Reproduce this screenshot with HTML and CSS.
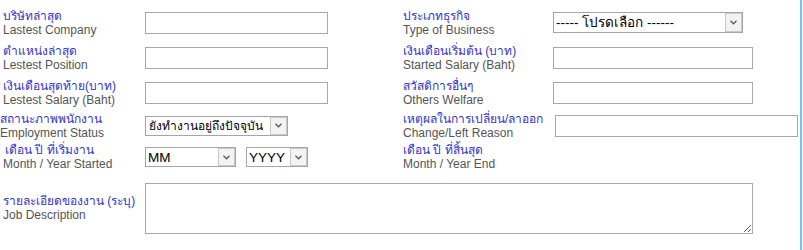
FILE: index.html
```html
<!DOCTYPE html>
<html lang="th">
  <head>
    <meta charset="UTF-8">
    <meta name="viewport" content="width=device-width, initial-scale=1.0">
    <link rel="stylesheet" href="styles.css">
    <title>Work Experience</title>
  </head>
  <body>
    <div class="wrapper">
      <form class="work">
        <label class="caption">
          <span class="th">บริษัทล่าสุด</span>
          <span class="en">Lastest Company</span>
        </label>
        <div class="field"><input class="text short" type="text"></div>
        <label class="caption right">
          <span class="th">ประเภทธุรกิจ</span>
          <span class="en">Type of Business</span>
        </label>
        <div class="field">
          <span class="pick business">
            <select><option>----- โปรดเลือก ------</option></select>
            <span class="arrow"><svg width="7" height="5" viewBox="0 0 7 5"><path d="M0.5 0.8 L3.5 3.8 L6.5 0.8" fill="none" stroke="#5a5a5a" stroke-width="1.3"/></svg></span>
          </span>
        </div>

        <label class="caption">
          <span class="th">ตำแหน่งล่าสุด</span>
          <span class="en">Lestest Position</span>
        </label>
        <div class="field"><input class="text short" type="text"></div>
        <label class="caption right">
          <span class="th">เงินเดือนเริ่มต้น (บาท)</span>
          <span class="en">Started Salary (Baht)</span>
        </label>
        <div class="field"><input class="text wide" type="text"></div>

        <label class="caption">
          <span class="th">เงินเดือนสุดท้าย(บาท)</span>
          <span class="en">Lestest Salary (Baht)</span>
        </label>
        <div class="field"><input class="text short" type="text"></div>
        <label class="caption right">
          <span class="th">สวัสดิการอื่นๆ</span>
          <span class="en">Others Welfare</span>
        </label>
        <div class="field"><input class="text wide" type="text"></div>

        <label class="caption flush">
          <span class="th">สถานะภาพพนักงาน</span>
          <span class="en">Employment Status</span>
        </label>
        <div class="field">
          <span class="pick status">
            <select><option>ยังทำงานอยู่ถึงปัจจุบัน</option></select>
            <span class="arrow"><svg width="7" height="5" viewBox="0 0 7 5"><path d="M0.5 0.8 L3.5 3.8 L6.5 0.8" fill="none" stroke="#5a5a5a" stroke-width="1.3"/></svg></span>
          </span>
        </div>
        <label class="caption right">
          <span class="th">เหตุผลในการเปลี่ยน/ลาออก</span>
          <span class="en">Change/Left Reason</span>
        </label>
        <div class="field"><input class="text reason" type="text"></div>

        <label class="caption indent">
          <span class="th">เดือน ปี ที่เริ่มงาน</span>
          <span class="en">Month / Year Started</span>
        </label>
        <div class="field dates">
          <span class="pick month">
            <select><option>MM</option></select>
            <span class="arrow"><svg width="7" height="5" viewBox="0 0 7 5"><path d="M0.5 0.8 L3.5 3.8 L6.5 0.8" fill="none" stroke="#5a5a5a" stroke-width="1.3"/></svg></span>
          </span>
          <span class="pick year">
            <select><option>YYYY</option></select>
            <span class="arrow"><svg width="7" height="5" viewBox="0 0 7 5"><path d="M0.5 0.8 L3.5 3.8 L6.5 0.8" fill="none" stroke="#5a5a5a" stroke-width="1.3"/></svg></span>
          </span>
        </div>
        <label class="caption right">
          <span class="th">เดือน ปี ที่สิ้นสุด</span>
          <span class="en">Month / Year End</span>
        </label>
        <div class="field"></div>

        <label class="caption">
          <span class="th">รายละเอียดของงาน (ระบุ)</span>
          <span class="en">Job Description</span>
        </label>
        <div class="field full"><textarea class="describe"></textarea></div>
      </form>
    </div>
  </body>
</html>
```

FILE: styles.css
```css
* {
margin: 0;
padding: 0;
box-sizing: border-box;
}
body {
background: #fff;
font-family: "Liberation Sans", "DejaVu Sans", "Noto Sans", sans-serif;
font-size: 12px;
}
.wrapper {
width: 802px;
height: 250px;
border-right: 2px solid #72c6f0;
}
.work {
display: grid;
grid-template-columns: 145px 258px 150px 1fr;
grid-template-rows: 35px 35px 35px 31px 32px 70px;
align-items: center;
padding-top: 5px;
}
.caption {
display: flex;
flex-direction: column;
padding-left: 3px;
line-height: 14px;
}
.caption.right {
padding-left: 0;
}
.caption.flush {
padding-left: 0;
}
.caption.indent .th {
padding-left: 2px;
}
.caption .th {
color: #3434c8;
}
.caption .en {
color: #555;
}
.field {
display: flex;
align-items: center;
}
.field.full {
grid-column: 2 / 5;
}
.field.dates {
gap: 10px;
}
.text {
height: 22px;
border: 1px solid #a9a9a9;
background: #fff;
font: inherit;
padding: 0 3px;
}
.text.short {
width: 183px;
}
.text.wide {
width: 200px;
}
.text.reason {
width: 243px;
margin-left: 2px;
}
.describe {
width: 608px;
height: 51px;
margin-top: 1px;
border: 1px solid #a9a9a9;
font: inherit;
}
.pick {
position: relative;
display: inline-block;
}
.pick select {
appearance: none;
-webkit-appearance: none;
width: 100%;
height: 100%;
border: 1px solid #a5a5a5;
border-radius: 0;
background: #fff;
color: #000;
font-family: "Liberation Sans", "DejaVu Sans", "Noto Sans", sans-serif;
font-size: 13.5px;
padding: 0 20px 0 2px;
}
.pick .arrow {
position: absolute;
top: 1px;
right: 1px;
bottom: 1px;
width: 17px;
display: flex;
align-items: center;
justify-content: center;
border: 1px solid #c9c9c9;
background: #f3f3f3;
}
.pick.business {
width: 190px;
height: 21px;
}
.pick.status {
width: 143px;
height: 20px;
}
.pick.status select {
font-size: 12px;
padding-left: 3px;
padding-right: 18px;
}
.pick.month {
width: 91px;
height: 20px;
}
.pick.year {
width: 62px;
height: 20px;
}
```
